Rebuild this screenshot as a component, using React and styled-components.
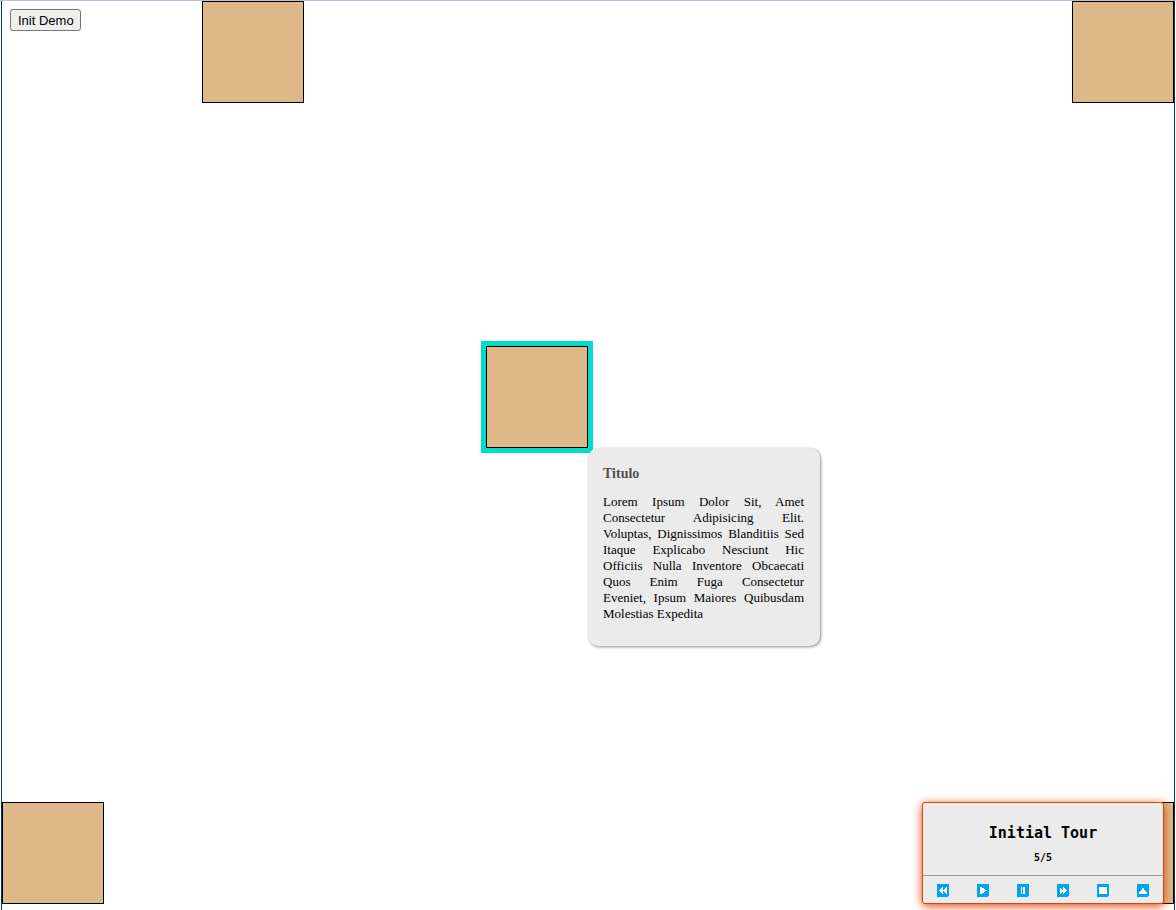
import React from "react";
import styled, { createGlobalStyle } from "styled-components";

const GlobalStyle = createGlobalStyle`
  * { box-sizing: border-box; }
  body { margin: 0; background: #fff; font-family: "Liberation Serif", serif; }
`;

const Page = styled.div`
  min-height: 100vh;
  display: flex;
  flex-direction: column;
  overflow: hidden;
  border-top: 1px solid #c0bcd4;
`;

const Frame = styled.div`
  flex: 1;
  display: flex;
  margin: 0 1px;
  padding-bottom: 6px;
  border: solid #003370;
  border-width: 0 1px;
`;

const Canvas = styled.main`
  position: relative;
  flex: 1;
  display: flex;
  flex-direction: column;
  justify-content: space-between;
`;

const TopRow = styled.header`
  display: grid;
  grid-template-columns: 200px 1fr auto;
`;

const MiddleRow = styled.div`
  display: grid;
  grid-template-columns: 1fr 1fr;
  justify-items: end;
  margin-bottom: 111px;
`;

const BottomRow = styled.footer`
  display: flex;
  justify-content: space-between;
`;

const DemoButton = styled.button`
  justify-self: start;
  align-self: start;
  height: 22px;
  margin: 8px;
  padding: 1px 6px 0 7px;
  border: 1px solid #767676;
  border-radius: 3px;
  background: #efefef;
  color: #000;
  font: 13px/20px "Liberation Sans", sans-serif;
`;

const Box = styled.div`
  position: relative;
  width: 102px;
  height: 102px;
  border: 1px solid #000;
  background: burlywood;
  box-shadow: ${(p) => (p.$active ? "0 0 0 5px #00dccb" : "none")};
`;

const Tooltip = styled.section`
  position: absolute;
  top: 100%;
  left: 100%;
  width: 232px;
  margin: 1px;
  padding: 17px 16px 24px 15px;
  border-radius: 10px;
  background: #ebebeb;
  box-shadow: 1px 1px 3px rgba(0, 0, 0, 0.45);
`;

const TooltipTitle = styled.h2`
  margin: 0 0 11px;
  color: #505050;
  font-size: 14px;
  line-height: 18px;
`;

const TooltipText = styled.p`
  margin: 0;
  font-size: 13px;
  line-height: 16px;
  text-align: justify;
  text-transform: capitalize;
`;

const Player = styled.aside`
  position: absolute;
  right: 10px;
  bottom: 0;
  width: 242px;
  height: 102px;
  display: flex;
  flex-direction: column;
  border: 1px solid #dc4400;
  border-radius: 3px;
  background: #ebebeb;
  box-shadow: 0 2px 10px #dc4400;
  font-family: "DejaVu Sans Mono", monospace;
  text-align: center;
`;

const PlayerInfo = styled.div`
  flex: 1;
  padding-top: 20px;
  border-bottom: 1px solid #999;
`;

const PlayerTitle = styled.h1`
  margin: 0;
  font-size: 15px;
  line-height: 20px;
`;

const PlayerCount = styled.p`
  margin: 8px 0 0;
  font-size: 10px;
  font-weight: bold;
  line-height: 14px;
`;

const Controls = styled.div`
  display: grid;
  grid-template-columns: repeat(6, 1fr);
  height: 27px;
`;

const Control = styled.button`
  display: grid;
  place-items: center;
  padding: 1px 0 0;
  border: 0;
  background: none;
`;

const icons = [
  ["Previous", "M2 6h1V5h1V4h1V3h1v3h1V5h1V4h1V3h1v7H9V9H8V8H7V7H6v3H5V9H4V8H3V7H2z"],
  ["Play", "M3 3h2v1h2v1h1v1h2v1H8v1H7v1H5v1H3z"],
  ["Pause", "M4 3h1v7H4zM6 3h2v7H6z"],
  ["Next", "M10 6H9V5H8V4H7V3H6v3H5V5H4V4H3v6h1V9h1V8h1v2h1V9h1V8h1V7h1z"],
  ["Stop", "M2 3h8v7H2z"],
  ["Collapse", "M5 4h2v2h1v1h1v1h1v2H2V8h1V7h1V6h1z"],
];

export default function App() {
  return (
    <>
      <GlobalStyle />
      <Page>
        <Frame>
          <Canvas>
            <TopRow>
              <DemoButton type="button">Init Demo</DemoButton>
              <Box />
              <Box />
            </TopRow>
            <MiddleRow>
              <Box $active>
                <Tooltip>
                  <TooltipTitle>Titulo</TooltipTitle>
                  <TooltipText>
                    Lorem ipsum dolor sit, amet consectetur adipisicing elit.
                    Voluptas, dignissimos blanditiis sed itaque explicabo
                    nesciunt hic officiis nulla inventore obcaecati quos enim
                    fuga consectetur eveniet,&nbsp;ipsum maiores quibusdam
                    molestias expedita
                  </TooltipText>
                </Tooltip>
              </Box>
            </MiddleRow>
            <BottomRow>
              <Box />
              <Box />
            </BottomRow>
            <Player>
              <PlayerInfo>
                <PlayerTitle>Initial Tour</PlayerTitle>
                <PlayerCount>5/5</PlayerCount>
              </PlayerInfo>
              <Controls>
                {icons.map(([label, path]) => (
                  <Control key={label} type="button" aria-label={label}>
                    <svg width="12" height="13" shapeRendering="crispEdges" aria-hidden="true">
                      <path d="M0 0h12v12h-1v1H0z" fill="#00a4ef" />
                      <path d={path} fill="#fff" />
                    </svg>
                  </Control>
                ))}
              </Controls>
            </Player>
          </Canvas>
        </Frame>
      </Page>
    </>
  );
}
